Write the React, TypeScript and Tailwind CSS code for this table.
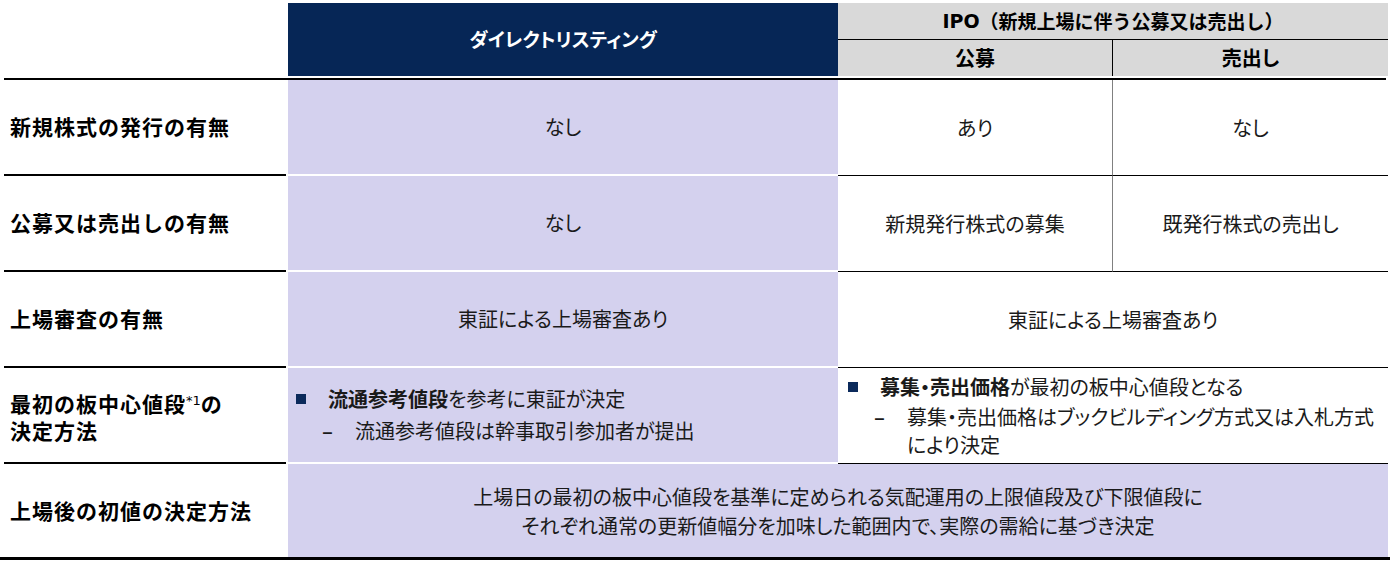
const label = "w-[282px] border-b-2 border-black flex items-center pl-[6px] font-bold text-[21px] tracking-[1px] text-black [font-feature-settings:normal]"
const purple = "w-[550px] bg-[#d4d1ee] border-b-2 border-white flex items-center justify-center text-[20px]"
const white = "border-b-[1.5px] border-black flex items-center justify-center text-[20px]"

function Bullet({ children }: { children: React.ReactNode }) {
  return (
    <div className="flex items-center leading-[28px]">
      <span className="w-[10px] h-[10px] bg-[#0b2a5b] mr-[22px] shrink-0" />
      <span>{children}</span>
    </div>
  )
}

function Sub({ children, gap }: { children: React.ReactNode; gap: string }) {
  return (
    <div className={`flex leading-[28px] pl-[26px] ${gap}`}>
      <span className="w-[33px] shrink-0 font-bold">–</span>
      <span>{children}</span>
    </div>
  )
}

export default function App() {
  return (
    <div className="w-[1393px] h-[564px] bg-white pt-[3px] pl-[4px] text-[#1a1a1a] font-['Noto_Sans_CJK_JP',sans-serif] [font-feature-settings:'palt']">
      {/* header */}
      <div className="flex h-[73px]">
        <div className="w-[284px]" />
        <div className="w-[550px] bg-[#062656] flex items-center justify-center text-white font-bold text-[19px]">
          ダイレクトリスティング
        </div>
        <div className="w-[550px] flex flex-col bg-[#d9d9d9] font-bold text-black">
          <div className="h-[37px] border-b border-black flex items-center justify-center text-[19px] [font-feature-settings:normal]">
            <span className="font-['DejaVu_Sans',sans-serif]">IPO</span>（新規上場に伴う公募又は売出し）
          </div>
          <div className="flex flex-1 text-[20px]">
            <div className="w-[275px] border-r border-black flex items-center justify-center">公募</div>
            <div className="flex-1 flex items-center justify-center">売出し</div>
          </div>
        </div>
      </div>
      <div className="h-[2px]" />
      <div className="h-[2px] w-[1382px] bg-black" />

      {/* row 1 */}
      <div className="flex h-[96px]">
        <div className={label}>新規株式の発行の有無</div>
        <div className="w-[2px]" />
        <div className={purple}>なし</div>
        <div className={`${white} w-[275px] border-r border-r-[#808080]`}>あり</div>
        <div className={`${white} w-[275px]`}>なし</div>
      </div>

      {/* row 2 */}
      <div className="flex h-[96px]">
        <div className={label}>公募又は売出しの有無</div>
        <div className="w-[2px]" />
        <div className={purple}>なし</div>
        <div className={`${white} w-[275px] border-r border-r-[#808080]`}>新規発行株式の募集</div>
        <div className={`${white} w-[275px]`}>既発行株式の売出し</div>
      </div>

      {/* row 3 */}
      <div className="flex h-[96px]">
        <div className={label}>上場審査の有無</div>
        <div className="w-[2px]" />
        <div className={purple}>東証による上場審査あり</div>
        <div className={`${white} w-[550px]`}>東証による上場審査あり</div>
      </div>

      {/* row 4 */}
      <div className="flex h-[96px]">
        <div className={`${label} leading-[27px]`}>
          <div>
            最初の板中心値段
            <span className="text-[13px] align-[7px] font-['DejaVu_Sans',sans-serif] font-normal tracking-normal">*1</span>
            の
            <br />
            決定方法
          </div>
        </div>
        <div className="w-[2px]" />
        <div className="w-[550px] bg-[#d4d1ee] border-b-2 border-white flex flex-col justify-center pl-[8px] text-[20px]">
          <Bullet>
            <b>流通参考値段</b>を参考に東証が決定
          </Bullet>
          <Sub gap="mt-[4px]">流通参考値段は幹事取引参加者が提出</Sub>
        </div>
        <div className="w-[550px] border-b-[1.5px] border-black flex flex-col justify-center pl-[10px] text-[20px]">
          <Bullet>
            <b>募集・売出価格</b>が最初の板中心値段となる
          </Bullet>
          <Sub gap="mt-[2px]">
            募集・売出価格はブックビルディング方式又は入札方式
            <br />
            により決定
          </Sub>
        </div>
      </div>

      {/* row 5 */}
      <div className="flex h-[93px]">
        <div className="w-[282px] flex items-center pl-[6px] font-bold text-[21px] tracking-[1px] text-black [font-feature-settings:normal]">
          上場後の初値の決定方法
        </div>
        <div className="w-[2px]" />
        <div className="w-[1100px] bg-[#d4d1ee] flex items-center justify-center text-center text-[20px] leading-[29px]">
          <div>
            上場日の最初の板中心値段を基準に定められる気配運用の上限値段及び下限値段に
            <br />
            それぞれ通常の更新値幅分を加味した範囲内で、実際の需給に基づき決定
          </div>
        </div>
      </div>
      <div className="h-[3px] w-[1390px] -ml-[4px] bg-black" />
    </div>
  )
}
